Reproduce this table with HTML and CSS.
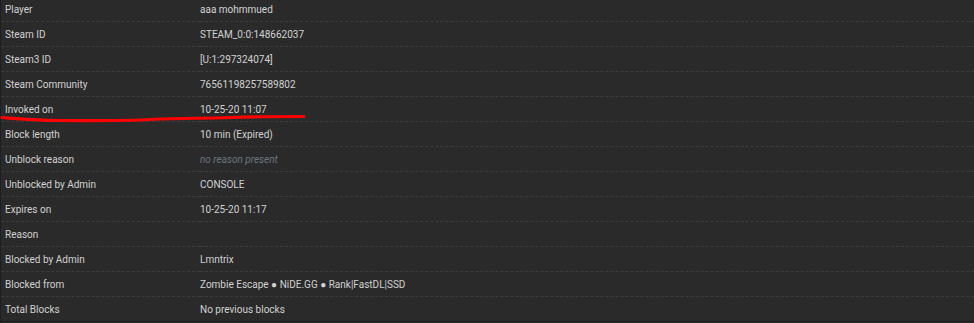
FILE: index.html
```html
<!DOCTYPE html>
<html>
<head>
<meta charset="utf-8">
<link rel="stylesheet" href="styles.css">
</head>
<body>
<div class="panel">
  <table class="info">
    <tr><td class="k">Player</td><td class="v">aaa mohmmued</td></tr>
    <tr><td class="k">Steam ID</td><td class="v">STEAM_0:0:148662037</td></tr>
    <tr><td class="k">Steam3 ID</td><td class="v">[U:1:297324074]</td></tr>
    <tr><td class="k">Steam Community</td><td class="v">76561198257589802</td></tr>
    <tr><td class="k">Invoked on</td><td class="v">10-25-20 11:07</td></tr>
    <tr><td class="k">Block length</td><td class="v">10 min (Expired)</td></tr>
    <tr><td class="k">Unblock reason</td><td class="v muted">no reason present</td></tr>
    <tr><td class="k">Unblocked by Admin</td><td class="v">CONSOLE</td></tr>
    <tr><td class="k">Expires on</td><td class="v">10-25-20 11:17</td></tr>
    <tr><td class="k">Reason</td><td class="v"></td></tr>
    <tr><td class="k">Blocked by Admin</td><td class="v">Lmntrix</td></tr>
    <tr><td class="k">Blocked from</td><td class="v">Zombie Escape ● NiDE.GG ● Rank|FastDL|SSD</td></tr>
    <tr><td class="k">Total Blocks</td><td class="v">No previous blocks</td></tr>
  </table>
  <svg class="scribble" width="310" height="12" viewBox="0 0 310 12">
    <path d="M1 3.5 C 20 5, 35 6.5, 60 6.5 S 120 7, 150 5.5 S 200 4.5, 230 3.5 S 280 2.5, 303 2.5" fill="none" stroke="#ff0000" stroke-width="3.2" stroke-linecap="round"/>
  </svg>
</div>
</body>
</html>
```
FILE: styles.css
```css
html, body {
  margin: 0;
  padding: 0;
  background: #2a2a2a;
}
.panel {
  position: relative;
  width: 974px;
  height: 323px;
  overflow: hidden;
  background: #2a2a2a;
  border-left: 1px solid #1f1f1f;
  box-sizing: border-box;
}
.info {
  width: 100%;
  border-collapse: collapse;
  margin-top: -3px;
  font-family: Roboto, "Liberation Sans", sans-serif;
  font-size: 10px;
  color: #d2d2d2;
}
.info td {
  height: 23px;
  padding: 1px 0 0 0;
  border-bottom: 1px dashed #3c3c3c;
  vertical-align: middle;
  white-space: nowrap;
}
.info td.k {
  width: 195px;
  padding-left: 4px;
}
.info tr:last-child td {
  border-bottom: 1px solid #1f1f1f;
}
.muted {
  color: #6c7682;
  font-style: italic;
}
.scribble {
  position: absolute;
  left: 0;
  top: 114px;
}
```
